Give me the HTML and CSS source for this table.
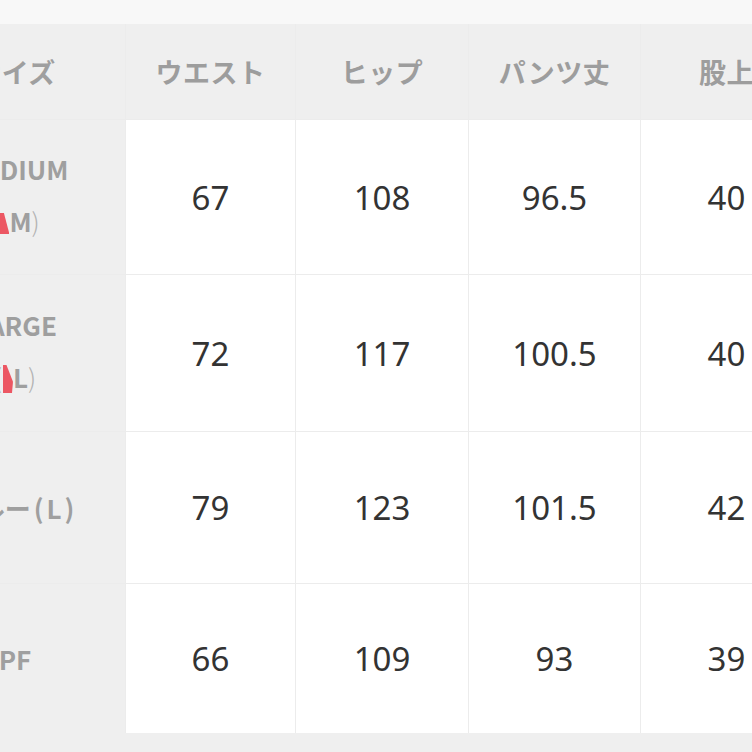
FILE: index.html
```html
<!DOCTYPE html>
<html lang="ja">
<head>
<meta charset="utf-8">
<title>サイズ表</title>
<link rel="stylesheet" href="styles.css">
</head>
<body>
<div class="topbar"></div>
<div class="chart">
  <div class="grid">
    <div class="cell head side">サイズ</div>
    <div class="cell head">ウエスト</div>
    <div class="cell head">ヒップ</div>
    <div class="cell head">パンツ丈</div>
    <div class="cell head">股上</div>

    <div class="cell side"><span class="line">MEDIUM</span><span class="line sub"><span class="paren">(</span><span class="mk"></span>M<span class="paren">)</span></span></div>
    <div class="cell num">67</div>
    <div class="cell num">108</div>
    <div class="cell num">96.5</div>
    <div class="cell num">40</div>

    <div class="cell side"><span class="line">LARGE</span><span class="line sub"><span class="paren">(</span><span class="mk tall"></span>L<span class="paren">)</span></span></div>
    <div class="cell num">72</div>
    <div class="cell num">117</div>
    <div class="cell num">100.5</div>
    <div class="cell num">40</div>

    <div class="cell side"><span class="line">ブルー<span class="pl">(L)</span></span></div>
    <div class="cell num">79</div>
    <div class="cell num">123</div>
    <div class="cell num">101.5</div>
    <div class="cell num">42</div>

    <div class="cell side">PF</div>
    <div class="cell num">66</div>
    <div class="cell num">109</div>
    <div class="cell num">93</div>
    <div class="cell num">39</div>
  </div>
</div>
</body>
</html>
```

FILE: styles.css
```css
html, body {
  margin: 0;
  padding: 0;
  overflow: hidden;
}

body {
  width: 752px;
  height: 752px;
  background: #efefef;
  font-family: "Noto Sans CJK JP", "Noto Sans", sans-serif;
}

.topbar {
  height: 24px;
  background: #f8f8f8;
}

.chart {
  margin-left: -95px;
  width: 907px;
}

.grid {
  display: grid;
  grid-template-columns: 220px 169px 172px 171px 171px;
  grid-template-rows: 95px 154px 156px 151px 149px;
  column-gap: 1px;
  row-gap: 1px;
  background: #ececec;
}

.cell {
  display: flex;
  flex-direction: column;
  align-items: center;
  justify-content: center;
  background: #ffffff;
}

.head {
  background: #efefef;
  color: #9d9d9d;
  font-size: 27px;
  font-weight: 700;
  letter-spacing: 0.5px;
}

.side {
  background: #efefef;
  color: #9f9f9f;
  font-size: 26px;
  font-weight: 700;
}

.head.side {
  font-size: 27px;
}

.line {
  display: block;
  line-height: 52px;
  white-space: nowrap;
}

.sub {
  margin-bottom: 4px;
}

.paren {
  font-weight: 300;
  color: #b3b3b3;
}

.pl {
  letter-spacing: 3px;
  margin-left: 3px;
}

.mk {
  display: inline-block;
  width: 10px;
  height: 21px;
  margin-left: 1px;
  vertical-align: -2px;
  background: #ec5763;
  clip-path: polygon(0 0, 45% 0, 100% 100%, 0 100%);
}

.mk.tall {
  height: 28px;
  vertical-align: -5px;
  clip-path: polygon(0 0, 35% 0, 100% 60%, 90% 100%, 0 100%);
}

.num {
  color: #333333;
  font-size: 33px;
  font-weight: 400;
  font-family: "Noto Sans", "Noto Sans CJK JP", sans-serif;
}
```
